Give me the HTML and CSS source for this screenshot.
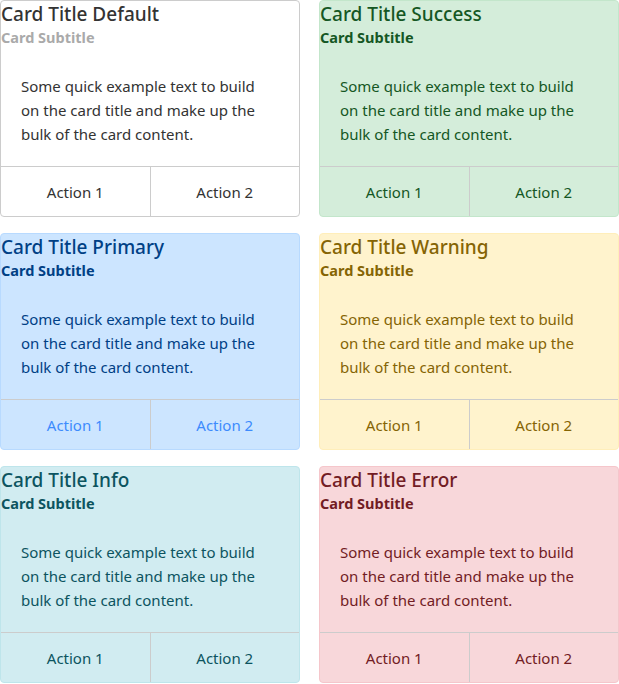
FILE: index.html
```html
<!DOCTYPE html>
<html>
<head>
<meta charset="utf-8">
<link rel="stylesheet" href="styles.css">
</head>
<body>
<div class="grid">
  <div class="card card-default">
    <div class="card-head">
      <div class="card-title">Card Title Default</div>
      <div class="card-subtitle">Card Subtitle</div>
    </div>
    <div class="card-body">Some quick example text to build on the card title and make up the bulk of the card content.</div>
    <div class="card-actions"><div class="action">Action 1</div><div class="action">Action 2</div></div>
  </div>
  <div class="card card-success">
    <div class="card-head">
      <div class="card-title">Card Title Success</div>
      <div class="card-subtitle">Card Subtitle</div>
    </div>
    <div class="card-body">Some quick example text to build on the card title and make up the bulk of the card content.</div>
    <div class="card-actions"><div class="action">Action 1</div><div class="action">Action 2</div></div>
  </div>
  <div class="card card-primary">
    <div class="card-head">
      <div class="card-title">Card Title Primary</div>
      <div class="card-subtitle">Card Subtitle</div>
    </div>
    <div class="card-body">Some quick example text to build on the card title and make up the bulk of the card content.</div>
    <div class="card-actions"><div class="action">Action 1</div><div class="action">Action 2</div></div>
  </div>
  <div class="card card-warning">
    <div class="card-head">
      <div class="card-title">Card Title Warning</div>
      <div class="card-subtitle">Card Subtitle</div>
    </div>
    <div class="card-body">Some quick example text to build on the card title and make up the bulk of the card content.</div>
    <div class="card-actions"><div class="action">Action 1</div><div class="action">Action 2</div></div>
  </div>
  <div class="card card-info">
    <div class="card-head">
      <div class="card-title">Card Title Info</div>
      <div class="card-subtitle">Card Subtitle</div>
    </div>
    <div class="card-body">Some quick example text to build on the card title and make up the bulk of the card content.</div>
    <div class="card-actions"><div class="action">Action 1</div><div class="action">Action 2</div></div>
  </div>
  <div class="card card-error">
    <div class="card-head">
      <div class="card-title">Card Title Error</div>
      <div class="card-subtitle">Card Subtitle</div>
    </div>
    <div class="card-body">Some quick example text to build on the card title and make up the bulk of the card content.</div>
    <div class="card-actions"><div class="action">Action 1</div><div class="action">Action 2</div></div>
  </div>
</div>
</body>
</html>
```
FILE: styles.css
```css
* { box-sizing: border-box; }
html, body { margin: 0; padding: 0; background: #fff; }
body {
  font-family: "Noto Sans", "Open Sans", sans-serif;
  color: #333;
}
.grid {
  display: grid;
  grid-template-columns: 1fr 1fr;
  column-gap: 19px;
  row-gap: 16px;
}
.card {
  border: 1px solid #ccc;
  border-radius: 4px;
  background: #fff;
  color: #333;
  display: flex;
  flex-direction: column;
  overflow: hidden;
}
.card-head {
  padding-bottom: 7px;
}
.card-title {
  font-size: 19px;
  font-weight: 500;
  line-height: 26px;
}
.card-subtitle {
  font-size: 14.5px;
  font-weight: 700;
  line-height: 20px;
  color: #aaa;
}
.card-body {
  padding: 20px 28px 20px 20px;
  font-size: 15px;
  line-height: 24px;
}
.card-actions {
  display: flex;
  border-top: 1px solid #ccc;
  height: 50px;
}
.action {
  flex: 1;
  display: flex;
  align-items: center;
  justify-content: center;
  font-size: 15px;
}
.action + .action { border-left: 1px solid #ccc; }

.card-success { background: #d4edda; border-color: #c3e6cb; color: #155724; }
.card-success .card-subtitle { color: #155724; }
.card-primary { background: #cce5ff; border-color: #b8daff; color: #004085; }
.card-primary .card-subtitle { color: #004085; }
.card-primary .action { color: #3d8bfd; }
.card-warning { background: #fff3cd; border-color: #ffeeba; color: #856404; }
.card-warning .card-subtitle { color: #856404; }
.card-info { background: #d1ecf1; border-color: #bee5eb; color: #0c5460; }
.card-info .card-subtitle { color: #0c5460; }
.card-error { background: #f8d7da; border-color: #f5c6cb; color: #721c24; }
.card-error .card-subtitle { color: #721c24; }
```
